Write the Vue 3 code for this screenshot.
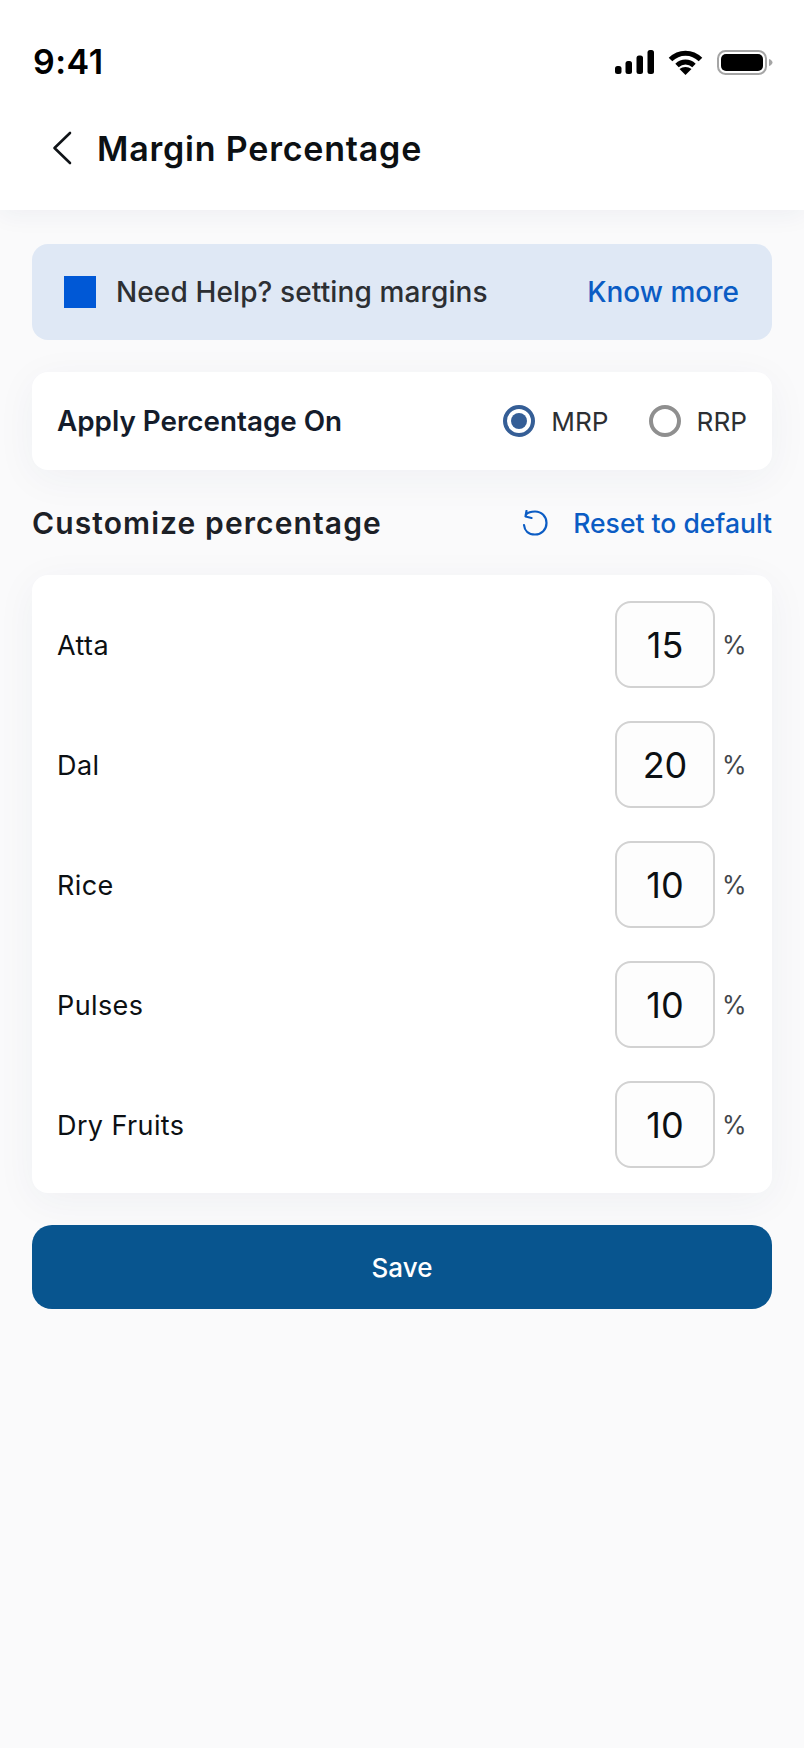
<script setup>
const rows = [
  { name: 'Atta', value: 15 },
  { name: 'Dal', value: 20 },
  { name: 'Rice', value: 10 },
  { name: 'Pulses', value: 10 },
  { name: 'Dry Fruits', value: 10 },
]
</script>

<template>
  <div class="page">
    <header class="top">
      <div class="status">
        <span class="time">9:41</span>
        <div class="status-icons">
          <svg width="39" height="24" viewBox="0 0 39 24" fill="#000">
            <rect x="0" y="16" width="6.5" height="8" rx="2.5" />
            <rect x="10.5" y="11" width="6.5" height="13" rx="2.5" />
            <rect x="21.5" y="5.5" width="6.5" height="18.5" rx="2.5" />
            <rect x="32.5" y="0" width="6.5" height="24" rx="2.5" />
          </svg>
          <svg width="35" height="25" viewBox="0 0 35 25" fill="none" stroke="#000" stroke-width="5">
            <path d="M2.5 9.5C11 1 24 1 32.5 9.5" />
            <path d="M9 15.5c5-4.6 12-4.6 17 0" />
            <path d="M17.5 25l-6-6c3.400-2.800 8.600-2.800 12 0z" fill="#000" stroke="none" />
          </svg>
          <svg width="56" height="25" viewBox="0 0 56 25" fill="none">
            <rect x="1" y="1" width="48" height="23" rx="7.500" stroke="#a5a5a5" stroke-width="2" />
            <rect x="4" y="4" width="42" height="17" rx="5" fill="#000" />
            <path d="M52 9c2 .6 3.500 2 3.500 3.500S54 15.400 52 16z" fill="#a5a5a5" />
          </svg>
        </div>
      </div>
      <div class="nav">
        <svg class="back" width="20" height="34" viewBox="0 0 20 34" fill="none" stroke="#101418" stroke-width="2.600" stroke-linecap="round" stroke-linejoin="round">
          <path d="M18 2 2.500 17 18 32" />
        </svg>
        <h1 class="title">Margin Percentage</h1>
      </div>
    </header>

    <main class="content">
      <section class="banner">
        <span class="square"></span>
        <span class="banner-text">Need Help? setting margins</span>
        <a class="know">Know more</a>
      </section>

      <section class="card apply">
        <span class="apply-label">Apply Percentage On</span>
        <div class="radios">
          <label class="radio-item">
            <span class="radio on"></span>
            <span class="radio-text">MRP</span>
          </label>
          <label class="radio-item">
            <span class="radio"></span>
            <span class="radio-text">RRP</span>
          </label>
        </div>
      </section>

      <div class="section-head">
        <h2 class="section-title">Customize percentage</h2>
        <div class="reset">
          <svg width="29" height="26" viewBox="0 0 29 26" fill="none" stroke="#0B5CC4" stroke-width="2.200" stroke-linecap="round" stroke-linejoin="round">
            <path d="M5 4.500C7 2.500 10 1.500 14 1.500c6.600 0 11.500 5 11.500 11.500S20.600 24.500 14 24.500 3.500 20.500 3 15" />
            <path d="M5.500 1 4.500 6.500 10.500 8" />
          </svg>
          <span class="reset-text">Reset to default</span>
        </div>
      </div>

      <section class="card list">
        <div v-for="row in rows" :key="row.name" class="row">
          <span class="row-name">{{ row.name }}</span>
          <div class="row-right">
            <span class="box">{{ row.value }}</span>
            <span class="pct">%</span>
          </div>
        </div>
      </section>

      <button class="save" type="button">Save</button>
    </main>
  </div>
</template>

<style>
html, body { margin: 0; background: #fafafb; }
</style>

<style scoped>
.page {
  width: 804px;
  min-height: 1748px;
  background: #fafafb;
  font-family: Inter, "Liberation Sans", sans-serif;
  color: #101418;
}
.top {
  height: 210px;
  background: #fff;
  box-shadow: 0 4px 24px rgba(30, 50, 100, 0.06);
  box-sizing: border-box;
  position: relative;
}
.status {
  height: 125px;
  box-sizing: border-box;
  padding: 49px 31px 0 33px;
  display: flex;
  justify-content: space-between;
  align-items: flex-start;
}
.time {
  font-size: 34px;
  line-height: 25px;
  font-weight: 600;
  letter-spacing: 0.5px;
  color: #000;
}
.status-icons {
  display: flex;
  align-items: flex-start;
  gap: 14px;
  margin-top: 1px;
}
.nav {
  display: flex;
  align-items: center;
  padding-left: 52px;
  gap: 25px;
  height: 46px;
}
.title {
  margin: 2px 0 0;
  font-size: 34px;
  line-height: 46px;
  font-weight: 600;
  letter-spacing: 0.8px;
  color: #0c1013;
}
.content {
  padding: 34px 32px 0;
  display: flex;
  flex-direction: column;
}
.banner {
  height: 96px;
  box-sizing: border-box;
  border-radius: 16px;
  background: #dfe8f5;
  display: flex;
  align-items: center;
  padding: 0 33px 0 32px;
}
.square {
  width: 32px;
  height: 32px;
  background: #0058d6;
}
.banner-text {
  margin-left: 20px;
  font-size: 28px;
  font-weight: 500;
  letter-spacing: 0.12px;
  color: #2c2f33;
  flex: 1;
}
.know {
  font-size: 28px;
  font-weight: 500;
  color: #0b5cc4;
}
.card {
  background: #fff;
  border-radius: 16px;
  box-shadow: 0 8px 40px rgba(30, 50, 100, 0.05);
}
.apply {
  margin-top: 32px;
  height: 98px;
  box-sizing: border-box;
  padding: 0 25px 0 25px;
  display: flex;
  align-items: center;
  justify-content: space-between;
}
.apply-label {
  font-size: 27.8px;
  font-weight: 600;
  color: #141c2b;
}
.radios {
  display: flex;
  gap: 40px;
}
.radio-item {
  display: flex;
  align-items: center;
  gap: 16px;
}
.radio {
  width: 32px;
  height: 32px;
  box-sizing: border-box;
  border-radius: 50%;
  border: 4px solid #8f8f8f;
  display: flex;
  align-items: center;
  justify-content: center;
}
.radio.on {
  border-color: #355e96;
}
.radio.on::after {
  content: "";
  width: 16px;
  height: 16px;
  border-radius: 50%;
  background: #355e96;
}
.radio-text {
  font-size: 26.2px;
  color: #2c2f33;
}
.section-head {
  height: 105px;
  display: flex;
  align-items: center;
  justify-content: space-between;
}
.section-title {
  margin: 0;
  font-size: 30px;
  font-weight: 600;
  letter-spacing: 1.1px;
  color: #1c2026;
}
.reset {
  display: flex;
  align-items: center;
  gap: 23px;
}
.reset-text {
  font-size: 26.5px;
  font-weight: 500;
  color: #0b5cc4;
}
.list {
  height: 618px;
  box-sizing: border-box;
  padding: 26px 25px 0;
  display: flex;
  flex-direction: column;
  gap: 33px;
}
.row {
  height: 87px;
  display: flex;
  align-items: center;
  justify-content: space-between;
}
.row-name {
  padding-top: 2px;
  font-size: 27px;
  font-weight: 400;
  letter-spacing: 0.4px;
  color: #0c1013;
}
.row-right {
  display: flex;
  align-items: center;
  gap: 7px;
}
.box {
  width: 100px;
  height: 87px;
  box-sizing: border-box;
  border: 2px solid #d2d2d2;
  border-radius: 16px;
  background: #fdfdfd;
  display: flex;
  align-items: center;
  justify-content: center;
  font-size: 36px;
  color: #0c1013;
}
.pct {
  width: 25px;
  font-size: 25px;
  color: #44474b;
}
.save {
  margin-top: 32px;
  height: 84px;
  border: none;
  border-radius: 20px;
  background: #08558f;
  color: #fff;
  font-family: inherit;
  font-size: 26px;
  font-weight: 500;
}
</style>
